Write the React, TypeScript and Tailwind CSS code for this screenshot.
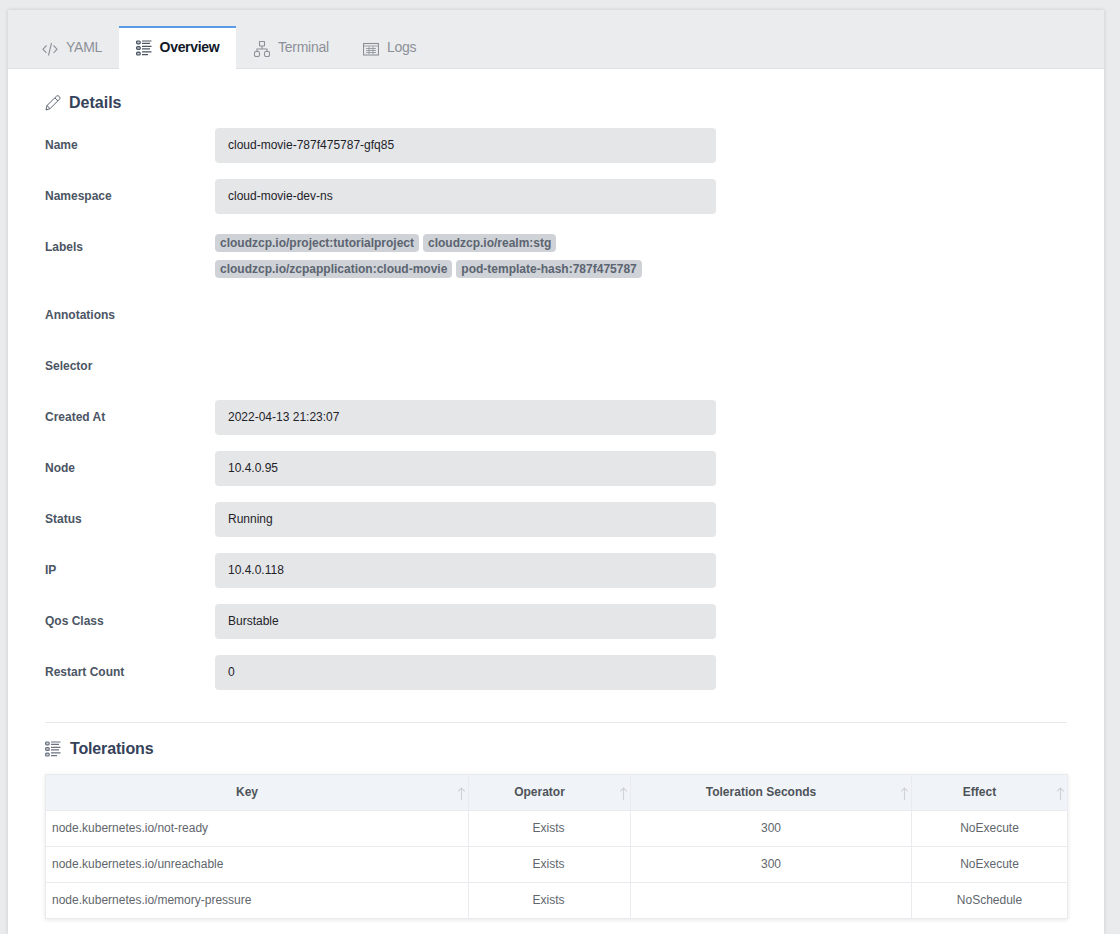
const ListIcon = ({ className }: { className: string }) => (
  <svg viewBox="0 0 16 16" className={className} fill="none" stroke="currentColor" strokeWidth="1.2">
    <rect x="0.6" y="1" width="3.6" height="2.8" rx="1" fill="currentColor" fillOpacity="0.35" />
    <rect x="0.6" y="6.6" width="3.6" height="2.8" rx="1" fill="currentColor" fillOpacity="0.35" />
    <rect x="0.6" y="12.2" width="3.6" height="2.8" rx="1" fill="currentColor" fillOpacity="0.35" />
    <path d="M6 1H15.5M6 3.4H14M6 6.4H15.5M6 8.8H14M6 11.8H15.5M6 14.6H12" />
  </svg>
);

const Field = ({ label, value, cls = "" }: { label: string; value?: string; cls?: string }) => (
  <div className="flex items-center h-[35px] mb-4">
    <div className={`w-[170px] pb-[2px] font-bold text-[12px] text-[#4b5563] ${cls}`}>{label}</div>
    {value !== undefined && (
      <div className="w-[501px] h-[35px] bg-[#e4e6e8] rounded-[4px] flex items-center px-[13px] pb-[1px] text-[12px] text-[#1f2328]">{value}</div>
    )}
  </div>
);

const Tag = ({ t }: { t: string }) => (
  <span className="h-[18px] px-[5px] flex items-center rounded-[4px] bg-[#cfd2d7] text-[12px] font-bold text-[#5b6470] whitespace-nowrap">{t}</span>
);

const Tab = ({ label, icon }: { label: string; icon: React.ReactNode }) => (
  <div className="h-[43px] -mb-[1px] flex items-center gap-[8px] text-[14px] tracking-[-0.25px] text-[#8b9098]">
    {icon}
    <span>{label}</span>
  </div>
);

const Th = ({ label, w }: { label: string; w: string }) => (
  <th className={`${w} relative h-[36px] pr-[20px] pb-[2px] bg-[#f0f3f8] border border-[#e9ebef] text-[12px] font-bold text-[#4e5358] text-center`}>
    <span>{label}</span>
    <svg viewBox="0 0 8 12" className="absolute right-[2px] top-[12px] w-[9px] h-[13px] text-[#cfd3d8]" fill="none" stroke="currentColor" strokeWidth="1">
      <path d="M4 12V1M1 4L4 1L7 4" />
    </svg>
  </th>
);

const Td = ({ children, cls }: { children?: React.ReactNode; cls: string }) => (
  <td className={`h-[36px] pb-[1px] border border-[#e9ebef] text-[12px] text-[#61666c] ${cls}`}>{children}</td>
);

const rows = [
  ["node.kubernetes.io/not-ready", "Exists", "300", "NoExecute"],
  ["node.kubernetes.io/unreachable", "Exists", "300", "NoExecute"],
  ["node.kubernetes.io/memory-pressure", "Exists", "", "NoSchedule"],
];

export default function App() {
  return (
    <div className="w-[1120px] h-[934px] overflow-hidden bg-[#eaebed] pt-[10px] pl-[8px]" style={{ fontFamily: '"Liberation Sans", Arial, sans-serif' }}>
      <div className="w-[1096px] h-[924px] bg-white shadow-[0_0_4px_rgba(0,0,0,0.15)]">
        <div className="h-[59px] bg-[#ebecee] border-b border-[#dfe1e4] flex items-end">
          <div className="flex items-center h-[43px] -mb-[1px] ml-[34px] w-[77px] gap-[8px] text-[14px] tracking-[-0.25px] text-[#8b9098]">
            <svg viewBox="0 0 16 16" className="w-[16px] h-[16px] mt-[2px]" fill="none" stroke="currentColor" strokeWidth="1.1">
              <path d="M4.5 4.5L1 8.2L4.5 12M11.5 4.5L15 8.2L11.5 12M9.5 2L6.5 14.5" />
            </svg>
            <span>YAML</span>
          </div>
          <div className="w-[117px] h-[43px] -mb-[1px] pb-[2px] bg-white border-t-2 border-[#5b9be6] flex items-center justify-center gap-[8px] text-[14px] tracking-[-0.3px] font-bold text-[#111827]">
            <ListIcon className="w-[16px] h-[16px] text-[#4b5563]" />
            <span>Overview</span>
          </div>
          <div className="ml-[18px] w-[91px]">
            <Tab label="Terminal" icon={
              <svg viewBox="0 0 16 16" className="w-[16px] h-[16px] mt-[2px]" fill="none" stroke="currentColor" strokeWidth="1.1">
                <rect x="5.5" y="0.5" width="5" height="4.5" rx="0.5" />
                <rect x="0.5" y="10.5" width="5" height="5" rx="1.5" />
                <rect x="10.5" y="10.5" width="5" height="5" rx="1.5" />
                <path d="M8 5V8M3 10.5V8H13V10.5" />
              </svg>} />
          </div>
          <div className="ml-[18px]">
            <Tab label="Logs" icon={
              <svg viewBox="0 0 16 16" className="w-[16px] h-[16px] mt-[2px]" fill="none" stroke="currentColor" strokeWidth="1.1">
                <rect x="0.5" y="2.5" width="15" height="11.5" />
                <path d="M0.5 5H15.5M3 7.5H13M3 9.5H13M3 11.5H13M6 5.5V13M10 5.5V13" strokeWidth="0.8" />
              </svg>} />
          </div>
        </div>

        <div className="pl-[37px] pr-[37px]">
          <div className="h-[59px] pt-[8px] flex items-center gap-[8px] text-[16px] font-bold text-[#35425a]">
            <svg viewBox="0 0 16 16" className="w-[16px] h-[16px] text-[#5b6470]" fill="none" stroke="currentColor" strokeWidth="1">
              <path d="M1 15L2 10.5L11.5 1.2C12.3 0.5 13.5 0.6 14.3 1.5C15.1 2.4 15.1 3.5 14.4 4.3L5 13.7L1 15ZM2 10.5L5 13.7M10 3L13 6" />
            </svg>
            <span>Details</span>
          </div>
          <Field label="Name" value="cloud-movie-787f475787-gfq85" />
          <Field label="Namespace" value="cloud-movie-dev-ns" />
          <div className="flex h-[52px] mb-4">
            <div className="w-[170px] h-[35px] pb-[2px] flex items-center font-bold text-[12px] text-[#4b5563]">Labels</div>
            <div className="flex flex-col gap-[8px] pt-[4px]">
              <div className="flex gap-[4px]">
                <Tag t="cloudzcp.io/project:tutorialproject" />
                <Tag t="cloudzcp.io/realm:stg" />
              </div>
              <div className="flex gap-[4px]">
                <Tag t="cloudzcp.io/zcpapplication:cloud-movie" />
                <Tag t="pod-template-hash:787f475787" />
              </div>
            </div>
          </div>
          <Field label="Annotations" />
          <Field label="Selector" />
          <Field label="Created At" value="2022-04-13 21:23:07" />
          <Field label="Node" value="10.4.0.95" />
          <Field label="Status" value="Running" />
          <Field label="IP" value="10.4.0.118" />
          <Field label="Qos Class" value="Burstable" />
          <Field label="Restart Count" value="0" />

          <div className="mt-[32px] border-t border-[#e7e8ea] h-[52px] pt-[1px] flex items-center gap-[9px] text-[16px] tracking-[-0.15px] font-bold text-[#35425a]">
            <ListIcon className="w-[16px] h-[16px] text-[#6b7280]" />
            <span>Tolerations</span>
          </div>
          <table className="w-[1022px] table-fixed border-collapse shadow-[0_1px_4px_rgba(0,0,0,0.1)]">
            <thead>
              <tr>
                <Th label="Key" w="w-[423px]" />
                <Th label="Operator" w="w-[162px]" />
                <Th label="Toleration Seconds" w="w-[281px]" />
                <Th label="Effect" w="w-[156px]" />
              </tr>
            </thead>
            <tbody>
              {rows.map((r) => (
                <tr key={r[0]}>
                  <Td cls="text-left pl-[6px]">{r[0]}</Td>
                  <Td cls="text-center pr-[2px]">{r[1]}</Td>
                  <Td cls="text-center">{r[2]}</Td>
                  <Td cls="text-center">{r[3]}</Td>
                </tr>
              ))}
            </tbody>
          </table>
        </div>
      </div>
    </div>
  );
}
